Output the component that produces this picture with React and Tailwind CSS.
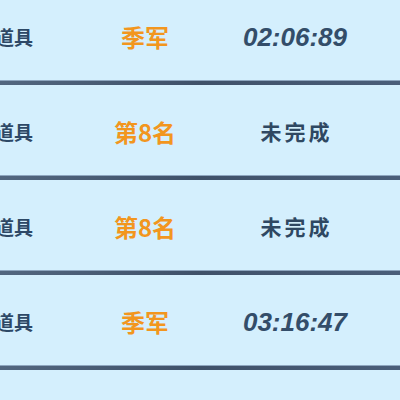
const rows = [
  { mode: '使用道具', rank: '季军', result: '02:06:89', finished: true },
  { mode: '使用道具', rank: '第8名', result: '未完成', finished: false },
  { mode: '使用道具', rank: '第8名', result: '未完成', finished: false },
  { mode: '使用道具', rank: '季军', result: '03:16:47', finished: true },
];

const cjk = "font-['Noto_Sans_CJK_SC','Noto_Sans',sans-serif]";

const Row = ({ mode, rank, result, finished }) => (
  <div>
    <div className="h-[90px] pt-1 grid grid-cols-[150px_150px_150px] items-center">
      <div className={`${cjk} text-center text-[19px] font-bold text-[#2d4866]`}>{mode}</div>
      <div className={`${cjk} text-center text-[24px] font-bold text-[#f2961e]`}>{rank}</div>
      {finished ? (
        <div className="text-center text-[26px] font-bold italic text-[#334d69] font-['Liberation_Sans',Arial,sans-serif]">
          {result}
        </div>
      ) : (
        <div className={`${cjk} text-center text-[21px] font-bold tracking-[3px] pl-[3px] text-[#2f4862]`}>{result}</div>
      )}
    </div>
    <div className="h-[5px] bg-gradient-to-r from-[#5a6f88] via-[#3f5169] to-[#4f6480] border-t border-[#8ea6bf]" />
  </div>
);

export default function App() {
  return (
    <div className="w-[400px] h-[400px] overflow-hidden bg-[#d4effd]">
      <div className="-mt-[10px] ml-[-80px] w-[560px]">
        {rows.map((r, i) => (
          <Row key={i} {...r} />
        ))}
      </div>
    </div>
  );
}
